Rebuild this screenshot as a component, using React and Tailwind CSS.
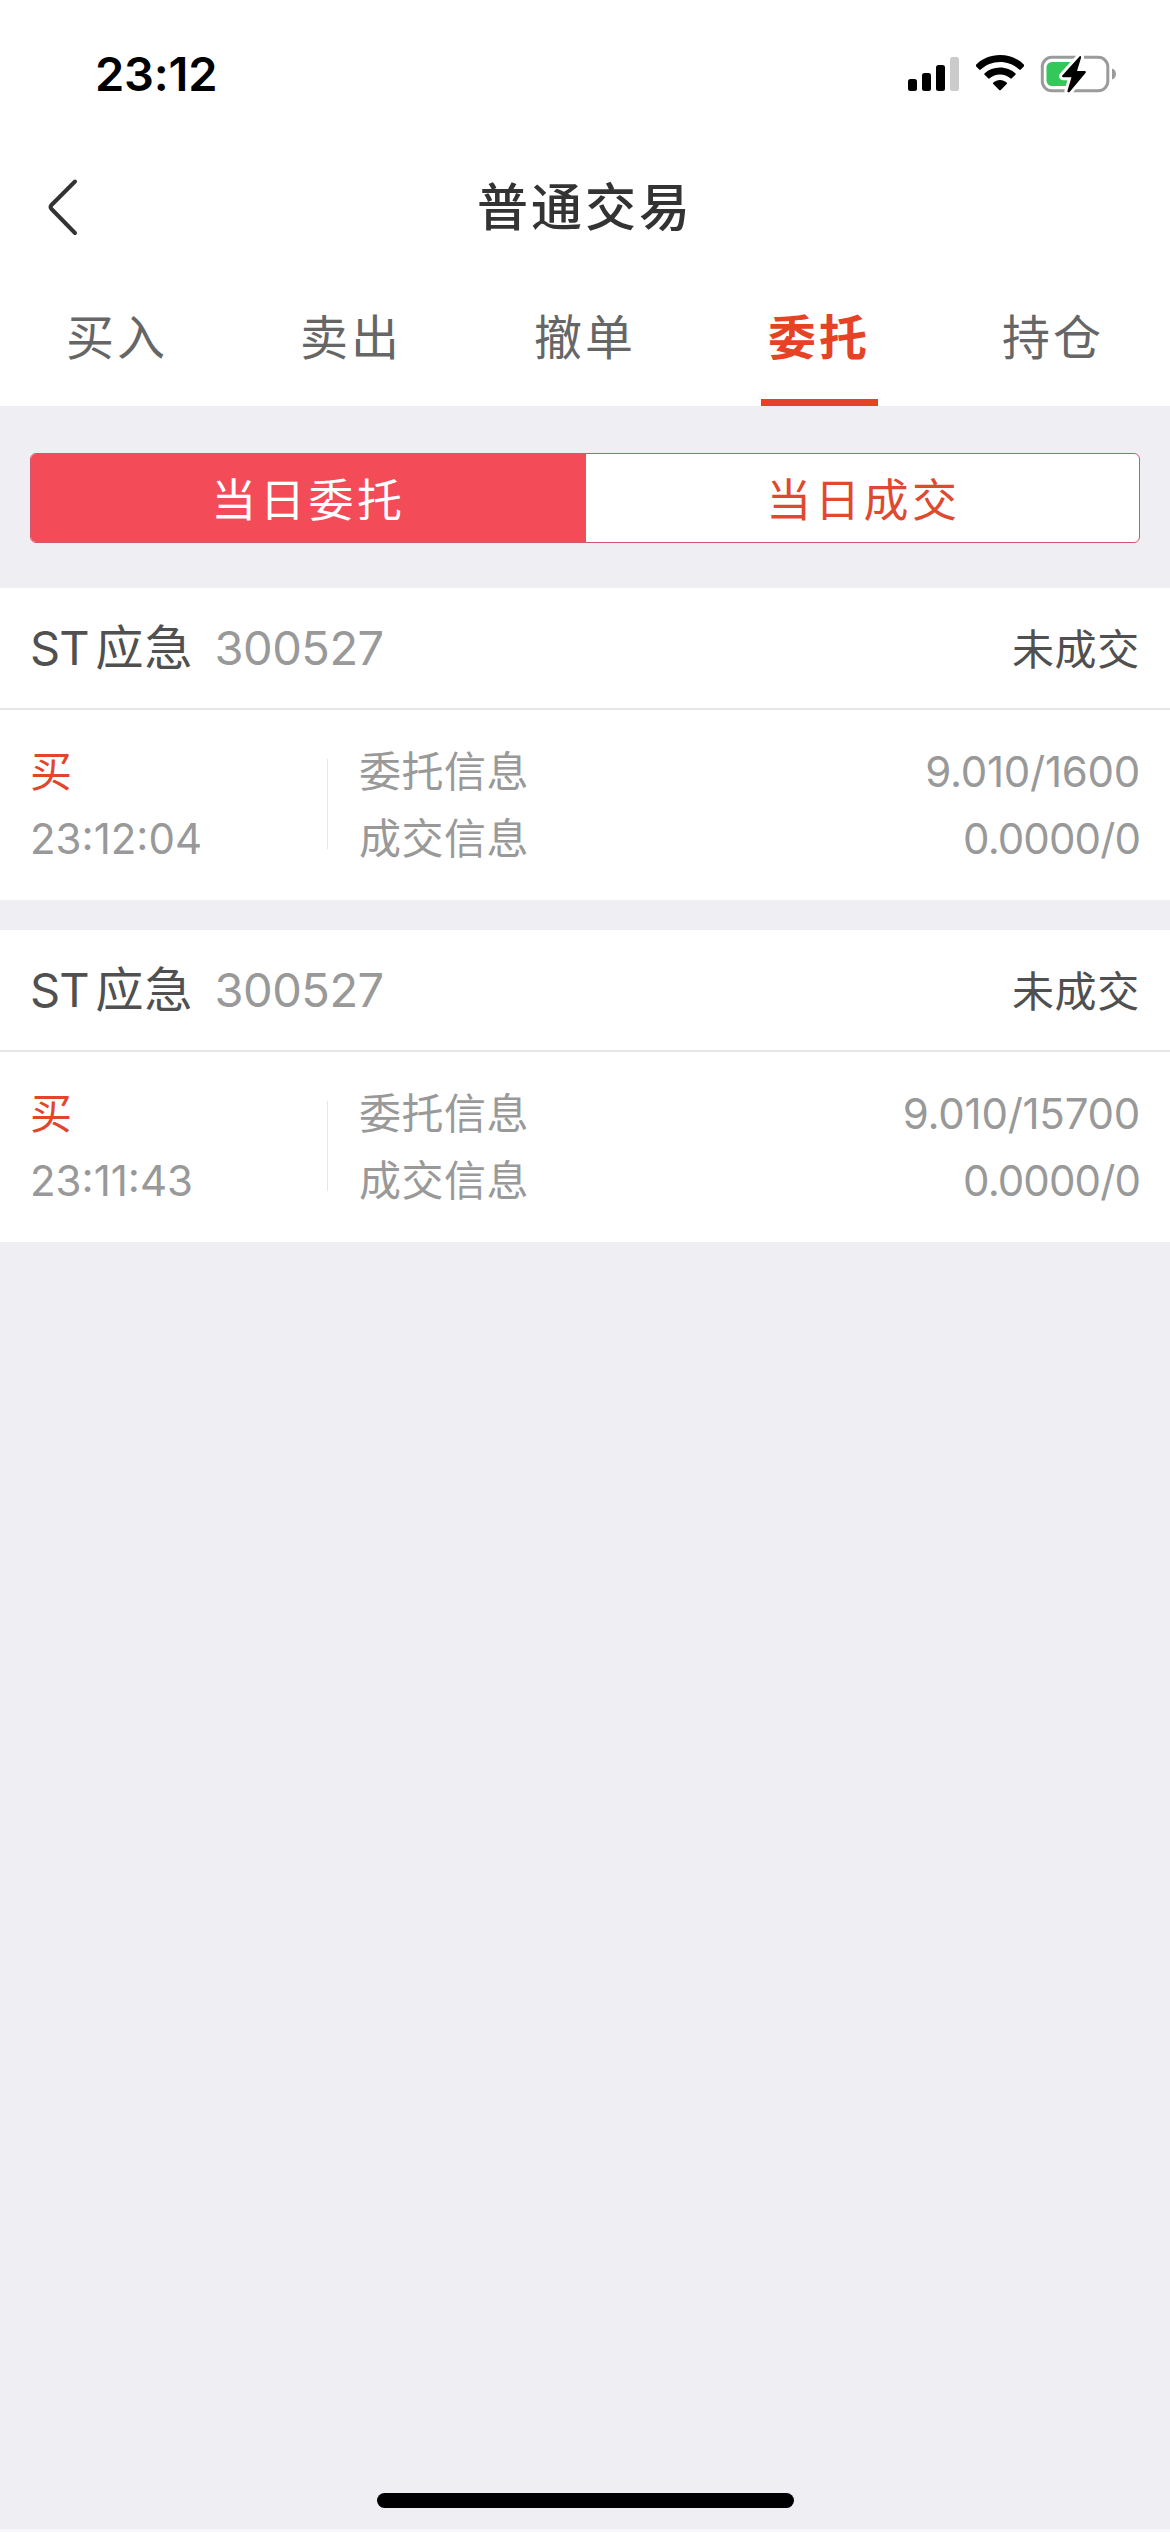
const orders = [
  { name: "应急", code: "300527", status: "未成交", side: "买", time: "23:12:04", entrust: "9.010/1600", deal: "0.0000/0" },
  { name: "应急", code: "300527", status: "未成交", side: "买", time: "23:11:43", entrust: "9.010/15700", deal: "0.0000/0" },
];

const tabs = ["买入", "卖出", "撤单", "委托", "持仓"];

function StatusBar() {
  return (
    <div className="flex h-[141px] items-start justify-between bg-white pl-[95px] pr-[53px]">
      <span className="mt-[46px] text-[47px] font-semibold leading-[56px] tracking-[-0.2px] text-black">23:12</span>
      <div className="mt-[54px] flex items-start">
        <svg className="mt-[3px]" width="52" height="35" viewBox="0 0 52 35">
          <rect x="0" y="22" width="9" height="12" rx="2.5" fill="#000" />
          <rect x="14" y="16" width="9" height="18" rx="2.5" fill="#000" />
          <rect x="28" y="8" width="9" height="26" rx="2.5" fill="#000" />
          <rect x="42" y="0" width="9" height="34" rx="2.5" fill="#cbcbcb" />
        </svg>
        <svg className="ml-4 mt-px" width="48" height="36" viewBox="0 0 48 36">
          <path d="M24 0C33.4 0 41.800 3.600 48 9.700C48.500 10.200 48.500 10.700 48 11.200L44.800 14.600C44.300 15.100 43.800 15.100 43.300 14.600C38.200 9.800 31.400 7 24 7S9.800 9.800 4.700 14.600C4.200 15.100 3.700 15.100 3.200 14.600L0 11.200C-.5 10.700-.5 10.200 0 9.700C6.200 3.600 14.600 0 24 0Z" />
          <path d="M24 12.500C30 12.500 35.400 14.700 39.300 18.300C39.900 18.800 39.900 19.300 39.400 19.800L35.800 23.300C35.300 23.800 34.800 23.800 34.300 23.300C31.600 20.900 28 19.500 24 19.500S16.400 20.900 13.700 23.300C13.200 23.800 12.700 23.800 12.200 23.300L8.600 19.800C8.100 19.300 8.100 18.800 8.700 18.300C12.600 14.700 18 12.500 24 12.500Z" />
          <path d="M24 25C26.500 25 28.800 25.900 30.600 27.400C31.200 27.900 31.200 28.400 30.700 28.900L24.800 34.900C24.300 35.400 23.700 35.400 23.200 34.900L17.300 28.900C16.800 28.400 16.800 27.900 17.400 27.400C19.200 25.900 21.500 25 24 25Z" />
        </svg>
        <svg className="ml-4" width="77" height="40" viewBox="0 0 77 40">
          <rect x="2.300" y="3.300" width="65.500" height="33.500" rx="9.500" fill="none" stroke="#9b9b9b" strokeWidth="3" />
          <path d="M72 14.500C74.500 15.200 76 17.500 76 20S74.500 24.800 72 25.500Z" fill="#9b9b9b" />
          <rect x="6.500" y="8" width="31" height="24" rx="5.500" fill="#34c759" />
          <path d="M39.500 2.500L22.500 21.200C21.600 22.300 22.200 23.200 23.400 23.200H31.500L27.500 36.500C27.100 38.500 28.800 39 30 37.500L45.500 18.900C46.300 17.900 45.800 17 44.600 17H37L41 4C41.300 2.200 40.500 1.500 39.500 2.500Z" fill="#000" stroke="#fff" strokeWidth="6" paintOrder="stroke" strokeLinejoin="round" />
        </svg>
      </div>
    </div>
  );
}

function Header() {
  return (
    <header className="grid h-[133px] grid-cols-3 items-center bg-white px-[47px]">
      <svg className="-mt-px" width="34" height="60" viewBox="0 0 34 60" fill="none" stroke="#333" strokeWidth="4" strokeLinecap="round" strokeLinejoin="round">
        <path d="M28 4.500L4.500 28Q2.500 30 4.500 32L28 56" />
      </svg>
      <h1 className="mt-px text-center text-[51px] font-medium leading-[72px] tracking-[3px] text-[#333333]">普通交易</h1>
    </header>
  );
}

function Tabs() {
  return (
    <nav className="grid h-[132px] grid-cols-5 bg-white text-[48px] leading-[72px] tracking-[3px] text-[#666666]">
      {tabs.map((t) =>
        t === "委托" ? (
          <div key={t} className="flex flex-col items-center justify-between font-bold text-[#e64226]">
            <span className="mt-[28px]">{t}</span>
            <div className="h-[7px] w-[117px] bg-[#e64226]" />
          </div>
        ) : (
          <div key={t} className="flex flex-col items-center">
            <span className="mt-[28px]">{t}</span>
          </div>
        )
      )}
    </nav>
  );
}

function Order({ o }) {
  return (
    <section className="h-[312px] bg-white">
      <div className="flex h-[122px] items-center justify-between border-b-2 border-[#e6e6e6] px-[30px] text-[#505050]">
        <div className="flex items-center text-[48px] leading-[72px]">
          <span className="text-[47px] tracking-[-1px]">ST</span>
          <span className="ml-[7px] tracking-[1px]">{o.name}</span>
          <span className="ml-[21px] text-[47px] tracking-[-0.5px] text-[#999999]">{o.code}</span>
        </div>
        <span className="mt-0.5 text-[42px] tracking-[0.7px]">{o.status}</span>
      </div>
      <div className="flex pt-[28px] text-[42px] leading-[67px] text-[#999999]">
        <div className="flex w-[327px] flex-col pl-[30px]">
          <span className="text-[#e1452c]">{o.side}</span>
          <span>{o.time}</span>
        </div>
        <div className="mt-[21px] h-[90px] w-px bg-[#e6e6e6]" />
        <div className="flex flex-col pl-[31px] tracking-[0.5px]">
          <span>委托信息</span>
          <span>成交信息</span>
        </div>
        <div className="flex grow flex-col items-end pr-[30px]">
          <span className="tracking-[-0.25px]">{o.entrust}</span>
          <span className="tracking-[-0.9px]">{o.deal}</span>
        </div>
      </div>
    </section>
  );
}

export default function App() {
  return (
    <main className="flex h-[2532px] w-[1170px] flex-col border-b-[3px] border-[#f8f8fc] bg-[#efeef3] font-['Inter','Noto_Sans_CJK_SC',sans-serif]">
      <StatusBar />
      <Header />
      <Tabs />
      <div className="mx-[30px] mb-[45px] mt-[47px] flex h-[90px] overflow-hidden rounded-md border border-[#d2566c] bg-white text-center text-[45px] leading-[94px] tracking-[3.6px]">
        <span className="w-[555px] bg-[#f44b59] text-white">当日委托</span>
        <span className="grow pl-0.5 text-[#dd4a30]">当日成交</span>
      </div>
      <div className="flex flex-col gap-[30px]">
        {orders.map((o) => (
          <Order key={o.time} o={o} />
        ))}
      </div>
      <div className="mx-auto mb-[21px] mt-auto h-[15px] w-[417px] rounded-full bg-black" />
    </main>
  );
}
